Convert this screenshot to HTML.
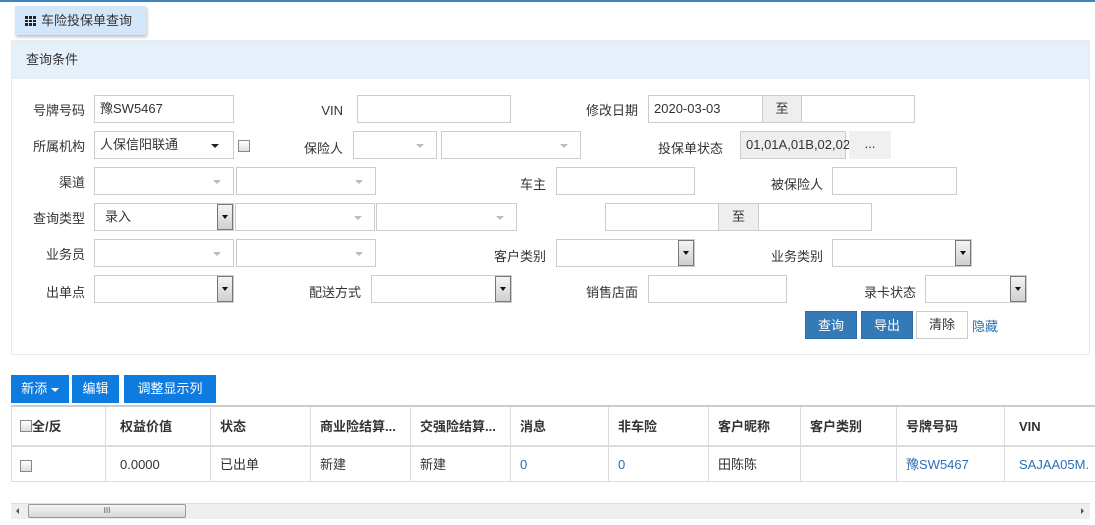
<!DOCTYPE html>
<html><head><meta charset="utf-8">
<style>
*{box-sizing:border-box;margin:0;padding:0}
body{width:1095px;height:525px;overflow:hidden;background:#fff;font-family:"Liberation Sans","Microsoft YaHei","Noto Sans CJK SC",sans-serif;font-size:13px;color:#333;position:relative}
.a{position:absolute}
.lbl{position:absolute;text-align:right;line-height:27px;height:27px;white-space:nowrap}
.in{position:absolute;height:28px;border:1px solid #ccc;background:#fff;line-height:26px;padding-left:5px;font-size:13px}
.sel:after{content:"";position:absolute;right:12px;top:12px;border-left:4px solid transparent;border-right:4px solid transparent;border-top:4px solid #bbb}
.sel.dk:after{border-top-color:#222;right:14px}
.dbtn{position:absolute;right:0;top:0;width:16px;height:26px;border:1px solid #777;background:linear-gradient(#f4f4f4,#cfcfcf)}
.dbtn:after{content:"";position:absolute;left:4px;top:10px;border-left:3px solid transparent;border-right:3px solid transparent;border-top:4px solid #111}
.zhi{position:absolute;height:28px;background:#eee;border:1px solid #ccc;text-align:center;line-height:26px}
.btn{position:absolute;height:28px;line-height:28px;text-align:center;color:#fff}
.tb{position:absolute;top:375px;height:28px;line-height:28px;background:#0e7be0;color:#fff;text-align:center}
.th,.td{position:absolute;border-right:1px solid #ddd;padding-left:9px;white-space:nowrap;overflow:hidden}
.th{top:407px;height:38px;line-height:40px;font-weight:bold}
.td{top:447px;height:34px;line-height:36px}
.lk{color:#2a6fb5}
.cb{display:inline-block;width:12px;height:12px;border:1px solid #888;background:linear-gradient(#fff,#ddd);vertical-align:middle}
</style></head><body>
<div class="a" style="left:0;top:0;width:1095px;height:2px;background:#3c86c0"></div>
<div class="a" style="left:15px;top:6px;width:131px;height:29px;background:#d4e7fa;box-shadow:1px 2px 3px rgba(0,0,0,.25);line-height:29px;padding-left:10px">
<span style="display:inline-block;width:11px;height:10px;vertical-align:-1px;background:
linear-gradient(90deg,#222 3px,transparent 3px,transparent 4px,#222 4px,#222 7px,transparent 7px,transparent 8px,#222 8px);margin-right:5px;-webkit-mask:linear-gradient(#000 3px,transparent 3px,transparent 4px,#000 4px,#000 6px,transparent 6px,transparent 7px,#000 7px)"></span>车险投保单查询</div>

<div class="a" style="left:11px;top:40px;width:1079px;height:315px;border:1px solid #e3ebf3"></div>
<div class="a" style="left:12px;top:41px;width:1077px;height:38px;background:#e6f0fb;line-height:38px;padding-left:14px">查询条件</div>

<!-- row1 -->
<div class="lbl" style="left:20px;width:65px;top:97px">号牌号码</div>
<div class="in" style="left:94px;top:95px;width:140px">豫SW5467</div>
<div class="lbl" style="left:300px;width:43px;top:97px">VIN</div>
<div class="in" style="left:357px;top:95px;width:154px"></div>
<div class="lbl" style="left:570px;width:68px;top:97px">修改日期</div>
<div class="in" style="left:648px;top:95px;width:115px">2020-03-03</div>
<div class="zhi" style="left:762px;top:95px;width:40px">至</div>
<div class="in" style="left:801px;top:95px;width:114px"></div>

<!-- row2 -->
<div class="lbl" style="left:20px;width:65px;top:133px">所属机构</div>
<div class="in sel dk" style="left:94px;top:131px;width:140px">人保信阳联通</div>
<div class="a" style="left:238px;top:137px"><span class="cb"></span></div>
<div class="lbl" style="left:300px;width:43px;top:135px">保险人</div>
<div class="in sel" style="left:353px;top:131px;width:84px;left:353px"></div>
<div class="in sel" style="left:441px;top:131px;width:140px"></div>
<div class="lbl" style="left:640px;width:83px;top:135px">投保单状态</div>
<div class="in" style="left:740px;top:131px;width:106px;background:#eee;padding-left:5px">01,01A,01B,02,02</div>
<div class="a" style="left:849px;top:131px;width:42px;height:28px;background:#f0f0f0;text-align:center;line-height:26px">...</div>

<!-- row3 -->
<div class="lbl" style="left:20px;width:65px;top:169px">渠道</div>
<div class="in sel" style="left:94px;top:167px;width:140px"></div>
<div class="in sel" style="left:236px;top:167px;width:140px"></div>
<div class="lbl" style="left:500px;width:46px;top:171px">车主</div>
<div class="in" style="left:556px;top:167px;width:139px"></div>
<div class="lbl" style="left:750px;width:73px;top:171px">被保险人</div>
<div class="in" style="left:832px;top:167px;width:125px"></div>

<!-- row4 -->
<div class="lbl" style="left:20px;width:65px;top:205px">查询类型</div>
<div class="in" style="left:94px;top:203px;width:140px;padding-left:10px">录入<div class="dbtn"></div></div>
<div class="in sel" style="left:235px;top:203px;width:140px"></div>
<div class="in sel" style="left:376px;top:203px;width:141px"></div>
<div class="in" style="left:605px;top:203px;width:114px"></div>
<div class="zhi" style="left:718px;top:203px;width:41px">至</div>
<div class="in" style="left:758px;top:203px;width:114px"></div>

<!-- row5 -->
<div class="lbl" style="left:20px;width:65px;top:241px">业务员</div>
<div class="in sel" style="left:94px;top:239px;width:140px"></div>
<div class="in sel" style="left:236px;top:239px;width:140px"></div>
<div class="lbl" style="left:470px;width:76px;top:243px">客户类别</div>
<div class="in" style="left:556px;top:239px;width:139px"><div class="dbtn"></div></div>
<div class="lbl" style="left:750px;width:73px;top:243px">业务类别</div>
<div class="in" style="left:832px;top:239px;width:140px"><div class="dbtn"></div></div>

<!-- row6 -->
<div class="lbl" style="left:20px;width:65px;top:279px">出单点</div>
<div class="in" style="left:94px;top:275px;width:140px"><div class="dbtn"></div></div>
<div class="lbl" style="left:290px;width:71px;top:279px">配送方式</div>
<div class="in" style="left:371px;top:275px;width:141px"><div class="dbtn"></div></div>
<div class="lbl" style="left:570px;width:68px;top:279px">销售店面</div>
<div class="in" style="left:648px;top:275px;width:139px"></div>
<div class="lbl" style="left:845px;width:71px;top:279px">录卡状态</div>
<div class="in" style="left:925px;top:275px;width:102px"><div class="dbtn"></div></div>

<div class="btn" style="left:805px;top:311px;width:52px;background:#337ab7;border:1px solid #2e6da4">查询</div>
<div class="btn" style="left:861px;top:311px;width:52px;background:#337ab7;border:1px solid #2e6da4">导出</div>
<div class="btn" style="left:916px;top:311px;width:52px;background:#fff;border:1px solid #ccc;color:#333;line-height:26px">清除</div>
<div class="a lk" style="left:972px;top:316px">隐藏</div>

<!-- toolbar -->
<div class="tb" style="left:11px;width:58px">新添 <span style="display:inline-block;border-left:4px solid transparent;border-right:4px solid transparent;border-top:4px solid #fff;vertical-align:middle"></span></div>
<div class="tb" style="left:72px;width:47px">编辑</div>
<div class="tb" style="left:124px;width:92px">调整显示列</div>

<!-- table -->
<div class="a" style="left:11px;top:405px;width:1084px;height:2px;background:#ccc"></div>
<div class="a" style="left:11px;top:445px;width:1084px;height:2px;background:#ddd"></div>
<div class="a" style="left:11px;top:481px;width:1084px;height:1px;background:#ddd"></div>
<div class="a" style="left:11px;top:407px;width:1px;height:75px;background:#ddd"></div>

<div class="th" style="left:12px;width:94px;padding-left:8px"><span class="cb" style="vertical-align:-1px"></span>全/反</div>
<div class="th" style="left:106px;width:105px;padding-left:14px">权益价值</div>
<div class="th" style="left:211px;width:100px">状态</div>
<div class="th" style="left:311px;width:100px">商业险结算...</div>
<div class="th" style="left:411px;width:100px">交强险结算...</div>
<div class="th" style="left:511px;width:98px">消息</div>
<div class="th" style="left:609px;width:100px">非车险</div>
<div class="th" style="left:709px;width:92px">客户昵称</div>
<div class="th" style="left:801px;width:96px">客户类别</div>
<div class="th" style="left:897px;width:108px;padding-left:9px">号牌号码</div>
<div class="th" style="left:1005px;width:90px;border-right:none;padding-left:14px">VIN</div>

<div class="td" style="left:12px;width:94px;padding-left:8px"><span class="cb"></span></div>
<div class="td" style="left:106px;width:105px;padding-left:14px">0.0000</div>
<div class="td" style="left:211px;width:100px">已出单</div>
<div class="td" style="left:311px;width:100px">新建</div>
<div class="td" style="left:411px;width:100px">新建</div>
<div class="td lk" style="left:511px;width:98px">0</div>
<div class="td lk" style="left:609px;width:100px">0</div>
<div class="td" style="left:709px;width:92px">田陈陈</div>
<div class="td" style="left:801px;width:96px"></div>
<div class="td lk" style="left:897px;width:108px">豫SW5467</div>
<div class="td lk" style="left:1005px;width:90px;border-right:none;padding-left:14px">SAJAA05M.</div>

<!-- scrollbar -->
<div class="a" style="left:11px;top:503px;width:1079px;height:16px;background:#eee;border-top:1px solid #ddd"></div>
<div class="a" style="left:16px;top:508px;border-top:3px solid transparent;border-bottom:3px solid transparent;border-right:3px solid #555"></div>
<div class="a" style="left:1081px;top:508px;border-top:3px solid transparent;border-bottom:3px solid transparent;border-left:3px solid #555"></div>
<div class="a" style="left:28px;top:504px;width:158px;height:14px;border:1px solid #999;border-radius:2px;background:linear-gradient(#f6f6f6,#d6d6d6);text-align:center;font-size:8px;line-height:12px;color:#555">III</div>
</body></html>
